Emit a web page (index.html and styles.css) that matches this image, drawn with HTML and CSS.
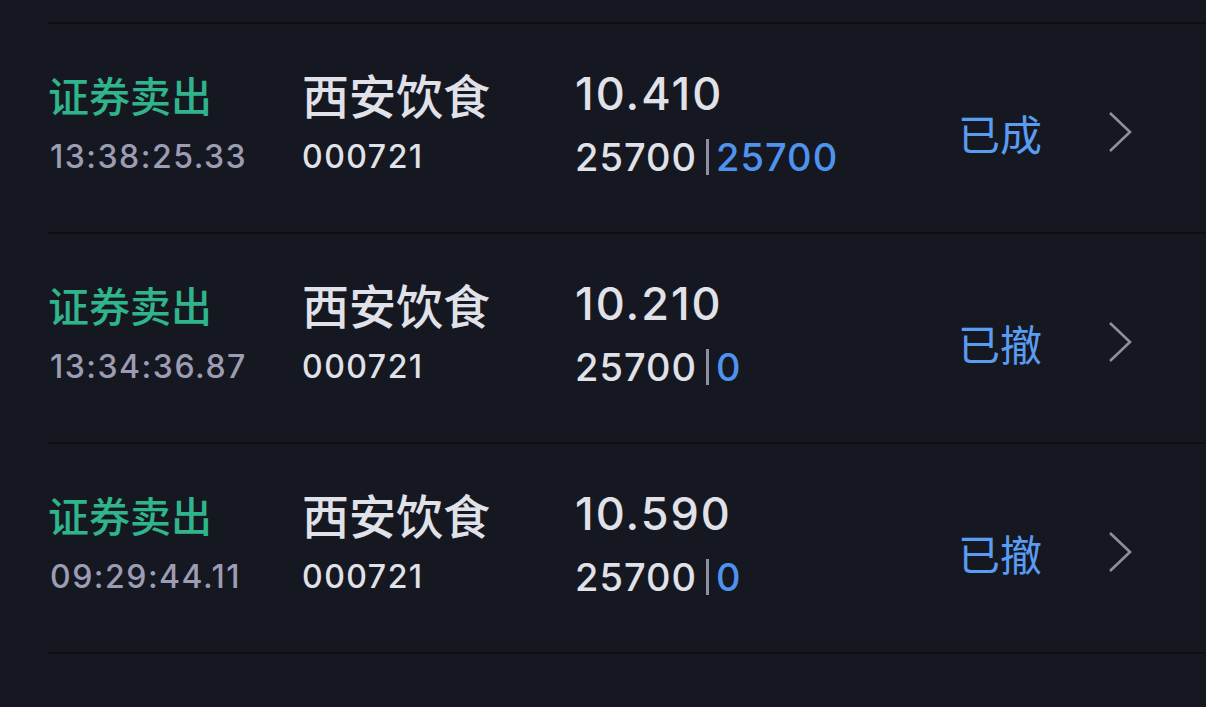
FILE: index.html
```html
<!DOCTYPE html>
<html lang="zh-CN">
<head>
    <meta charset="UTF-8">
    <title>委托列表</title>
    <link rel="stylesheet" href="styles.css">
</head>
<body>
    <ul class="order-list">
        <li class="order">
            <div class="col-type">
                <div class="type">证券卖出</div>
                <div class="time">13:38:25.33</div>
            </div>
            <div class="col-stock">
                <div class="name">西安饮食</div>
                <div class="code">000721</div>
            </div>
            <div class="col-price">
                <div class="price">10.410</div>
                <div class="qty">25700<span class="sep"></span><span class="done">25700</span></div>
            </div>
            <div class="status">已成</div>
            <svg class="chevron" width="26" height="42" viewBox="0 0 26 42"><path d="M3 2 L23 21 L3 40" fill="none" stroke="#8d8f99" stroke-width="2.6"/></svg>
        </li>
        <li class="order">
            <div class="col-type">
                <div class="type">证券卖出</div>
                <div class="time">13:34:36.87</div>
            </div>
            <div class="col-stock">
                <div class="name">西安饮食</div>
                <div class="code">000721</div>
            </div>
            <div class="col-price">
                <div class="price">10.210</div>
                <div class="qty">25700<span class="sep"></span><span class="done">0</span></div>
            </div>
            <div class="status">已撤</div>
            <svg class="chevron" width="26" height="42" viewBox="0 0 26 42"><path d="M3 2 L23 21 L3 40" fill="none" stroke="#8d8f99" stroke-width="2.6"/></svg>
        </li>
        <li class="order">
            <div class="col-type">
                <div class="type">证券卖出</div>
                <div class="time">09:29:44.11</div>
            </div>
            <div class="col-stock">
                <div class="name">西安饮食</div>
                <div class="code">000721</div>
            </div>
            <div class="col-price">
                <div class="price">10.590</div>
                <div class="qty">25700<span class="sep"></span><span class="done">0</span></div>
            </div>
            <div class="status">已撤</div>
            <svg class="chevron" width="26" height="42" viewBox="0 0 26 42"><path d="M3 2 L23 21 L3 40" fill="none" stroke="#8d8f99" stroke-width="2.6"/></svg>
        </li>
    </ul>
</body>
</html>
```

FILE: styles.css
```css
body {
    margin: 0;
    padding: 0;
    background-color: #161821;
    font-family: Inter, "Noto Sans CJK SC", sans-serif;
    color: #e1e2e9;
}

.order-list {
    list-style: none;
    margin: 22px 0 0 48px;
    padding: 0;
    border-top: 2px solid #0f1016;
}

.order {
    height: 208px;
    border-bottom: 2px solid #0f1016;
    display: flex;
    align-items: center;
}

.col-type,
.col-stock,
.col-price {
    padding-bottom: 6px;
}

.col-type {
    width: 254px;
}

.col-stock {
    width: 273px;
}

.col-price {
    width: 383px;
}

.type {
    font-family: "Noto Sans CJK SC", sans-serif;
    font-size: 41px;
    font-weight: 500;
    line-height: 48px;
    color: #30b48c;
}

.time {
    font-size: 32px;
    font-weight: 500;
    letter-spacing: 1.5px;
    line-height: 46px;
    margin-top: 16px;
    padding-left: 2px;
    color: #9c9cb4;
}

.name {
    font-family: "Noto Sans CJK SC", sans-serif;
    font-size: 47px;
    font-weight: 500;
    line-height: 48px;
    color: #e1e2e9;
}

.code {
    font-size: 32px;
    font-weight: 500;
    letter-spacing: 1.5px;
    line-height: 46px;
    margin-top: 16px;
    color: #e1e2e9;
}

.price {
    font-size: 45px;
    font-weight: 500;
    letter-spacing: 2px;
    line-height: 48px;
}

.qty {
    font-size: 38px;
    font-weight: 500;
    letter-spacing: 1px;
    line-height: 46px;
    margin-top: 16px;
    display: flex;
    align-items: center;
}

.sep {
    width: 3px;
    height: 36px;
    background-color: #8e8fa0;
    margin: 0 7px 0 9px;
}

.done {
    color: #4f93ee;
}

.status {
    font-family: "Noto Sans CJK SC", sans-serif;
    font-size: 42px;
    color: #5a9cf2;
    width: 149px;
    margin-top: 8px;
}

.chevron {
    margin-top: 8px;
}
```
